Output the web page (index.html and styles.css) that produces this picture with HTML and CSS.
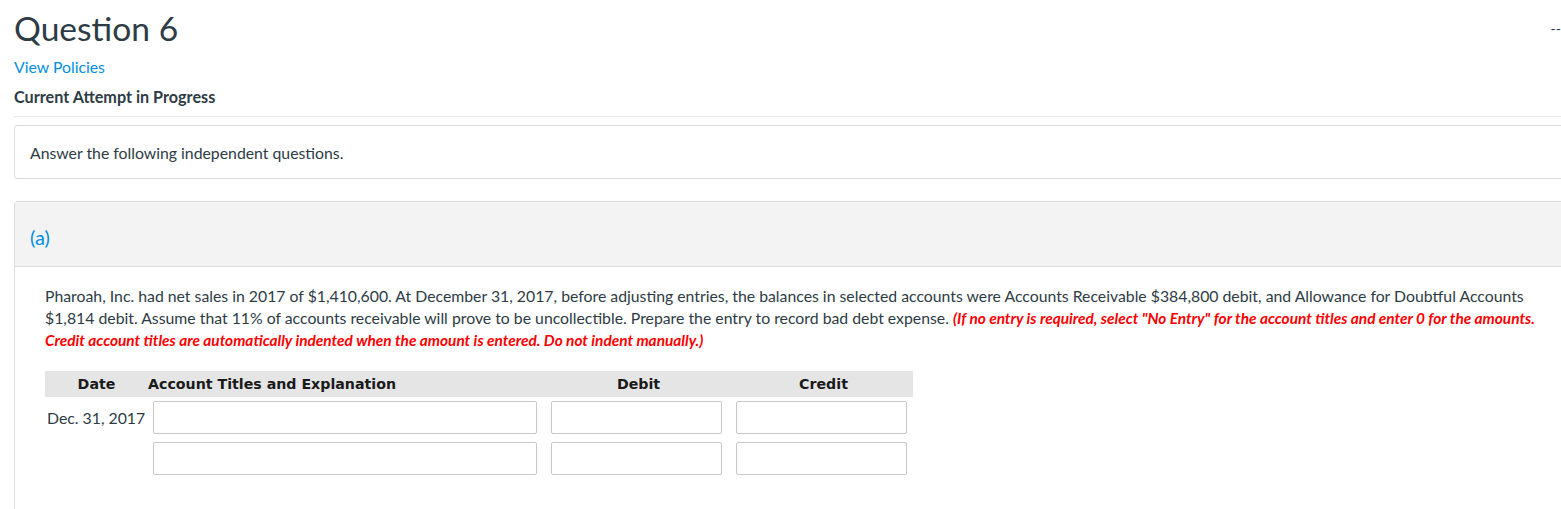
FILE: index.html
```html
<!DOCTYPE html>
<html>
<head>
<meta charset="utf-8">
<link rel="stylesheet" href="styles.css">
</head>
<body>
<div class="page">
  <div class="title-row">
    <h1 class="title">Question 6</h1>
    <span class="points">--</span>
  </div>
  <a class="policies" href="#">View Policies</a>
  <div class="attempt">Current Attempt in Progress</div>
  <div class="intro">Answer the following independent questions.</div>
  <div class="part">
    <div class="part-head">(a)</div>
    <div class="part-body">
      <p class="prompt">Pharoah, Inc. had net sales in 2017 of $1,410,600. At December 31, 2017, before adjusting entries, the balances in selected accounts were Accounts Receivable $384,800 debit, and Allowance for Doubtful Accounts $1,814 debit. Assume that 11% of accounts receivable will prove to be uncollectible. Prepare the entry to record bad debt expense. <em class="note">(If no entry is required, select "No Entry" for the account titles and enter 0 for the amounts. Credit account titles are automatically indented when the amount is entered. Do not indent manually.)</em></p>
      <div class="journal">
        <div class="jhead">
          <span class="c-date">Date</span>
          <span class="c-acct">Account Titles and Explanation</span>
          <span class="c-debit">Debit</span>
          <span class="c-credit">Credit</span>
        </div>
        <div class="jrow">
          <span class="date-val">Dec. 31, 2017</span>
          <input class="field f-acct" type="text">
          <input class="field f-amt" type="text">
          <input class="field f-amt" type="text">
        </div>
        <div class="jrow">
          <span class="date-val"></span>
          <input class="field f-acct" type="text">
          <input class="field f-amt" type="text">
          <input class="field f-amt" type="text">
        </div>
      </div>
    </div>
  </div>
</div>
</body>
</html>
```

FILE: styles.css
```css
html, body {
  margin: 0;
  padding: 0;
  background: #fff;
  overflow: hidden;
}
body {
  font-family: Lato, "Open Sans", sans-serif;
  color: #2d3b45;
}
.page {
  width: 1580px;
  padding: 0 0 0 14px;
}
.title-row {
  display: flex;
  justify-content: space-between;
  width: 1547px;
  height: 56px;
}
.title {
  margin: 8px 0 0 0;
  font-weight: 400;
  font-size: 33.6px;
  line-height: 40px;
  color: #2d3b45;
}
.points {
  margin-top: 20px;
  font-size: 14px;
  color: #2d3b45;
}
.policies {
  display: block;
  color: #008ee2;
  text-decoration: none;
  font-size: 15.8px;
  line-height: 20px;
  margin-top: 1px;
}
.attempt {
  margin-top: 10px;
  font-weight: 700;
  font-size: 16.2px;
  line-height: 20px;
  padding-bottom: 9px;
  border-bottom: 1px solid #e8e8e8;
}
.intro {
  margin-top: 8px;
  border: 1px solid #dcdcdc;
  border-radius: 3px;
  height: 54px;
  box-sizing: border-box;
  padding: 17px 0 0 15px;
  font-size: 15.8px;
  line-height: 20px;
}
.part {
  margin-top: 22px;
  border: 1px solid #dcdcdc;
  border-radius: 3px;
  height: 340px;
}
.part-head {
  background: #f3f3f3;
  height: 65px;
  box-sizing: border-box;
  border-bottom: 1px solid #dcdcdc;
  padding: 23px 0 0 15px;
  color: #008ee2;
  font-size: 20px;
  line-height: 24px;
}
.part-body {
  padding: 18px 0 0 30px;
}
.prompt {
  margin: 0;
  width: 1500px;
  font-size: 15.8px;
  line-height: 21.5px;
}
.note {
  color: #ff0000;
  font-weight: 700;
  font-size: 15.4px;
}
.journal {
  margin-top: 19px;
}
.jhead {
  display: flex;
  align-items: center;
  width: 868px;
  background: #e5e5e5;
  height: 26px;
  font-family: "DejaVu Sans", Verdana, sans-serif;
  font-weight: 700;
  font-size: 14.2px;
  color: #1a1a1a;
}
.c-date {
  width: 103px;
  text-align: center;
  flex: none;
}
.c-acct {
  width: 398px;
  flex: none;
}
.c-debit, .c-credit {
  width: 185px;
  text-align: center;
  flex: none;
}
.jrow {
  display: flex;
  align-items: center;
  margin-top: 4px;
}
.jrow + .jrow {
  margin-top: 8px;
}
.date-val {
  width: 108px;
  flex: none;
  padding-left: 2px;
  box-sizing: border-box;
  font-size: 15.8px;
  color: #2d3b45;
}
.field {
  flex: none;
  height: 33px;
  box-sizing: border-box;
  border: 1px solid #c8c8c8;
  border-radius: 2px;
  background: #fff;
  margin: 0;
  padding: 0;
}
.f-acct {
  width: 384px;
  margin-right: 14px;
}
.f-amt {
  width: 171px;
  margin-right: 14px;
}
```
